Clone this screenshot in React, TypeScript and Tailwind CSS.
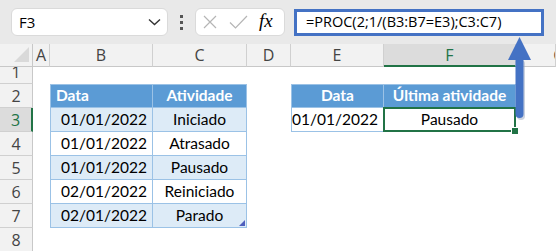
import React from "react";

const FONT = { fontFamily: "Lato, 'Open Sans', sans-serif" };

type Cell = {
  text?: string;
  align?: "l" | "c" | "r";
  kind?: "th" | "band" | "plain" | "none";
  first?: boolean;
  top?: boolean;
  sel?: boolean;
  handle?: boolean;
};

const colLetters = ["A", "B", "C", "D", "E", "F", "G"];

function rowCells(r: number): Cell[] {
  const empty: Cell = { kind: "none" };
  const cells: Cell[] = [empty, empty, empty, empty, empty, empty, empty];
  const t1: [string, string][] = [
    ["01/01/2022", "Iniciado"],
    ["01/01/2022", "Atrasado"],
    ["01/01/2022", "Pausado"],
    ["02/01/2022", "Reiniciado"],
    ["02/01/2022", "Parado"],
  ];
  if (r === 2) {
    cells[1] = { text: "Data", kind: "th", align: "l", first: true, top: true };
    cells[2] = { text: "Atividade", kind: "th", align: "c", top: true };
    cells[4] = { text: "Data", kind: "th", align: "c", first: true, top: true };
    cells[5] = { text: "Última atividade", kind: "th", align: "c", top: true };
  } else if (r >= 3 && r <= 7) {
    const band = r % 2 === 1 ? "band" : "plain";
    const [d, a] = t1[r - 3];
    cells[1] = { text: d, kind: band, align: "r", first: true };
    cells[2] = { text: a, kind: band, align: "c", handle: r === 7 };
  }
  if (r === 3) {
    cells[4] = { text: "01/01/2022", kind: "plain", align: "r", first: true };
    cells[5] = { text: "Pausado", kind: "plain", align: "c", sel: true };
  }
  return cells;
}

function GridCell({ c }: { c: Cell }) {
  if (c.kind === "none") return <div className="bg-white" />;
  const bg =
    c.kind === "th"
      ? "bg-[#5b9bd5] text-white font-bold"
      : c.kind === "band"
      ? "bg-[#ddebf7] text-black"
      : "bg-white text-black";
  const just =
    c.align === "l" ? "justify-start pl-[5px]" : c.align === "r" ? "justify-end pr-[5px]" : "justify-center";
  return (
    <div
      className={`relative flex items-end pb-[1px] text-[15.5px] leading-[22px] border-[#9bc2e6] border-r border-b ${
        c.first ? "border-l" : ""
      } ${c.top ? "border-t" : ""} ${bg} ${just}`}
    >
      <span className="whitespace-nowrap">{c.text}</span>
      {c.sel && (
        <>
          <div className="absolute -left-[1px] -top-[1px] -right-[1px] -bottom-[1px] border-2 border-[#217346]" />
          <div className="absolute -right-[4px] -bottom-[4px] w-[6px] h-[6px] bg-[#217346] border border-white box-content" />
        </>
      )}
      {c.handle && (
        <svg className="absolute right-[1px] bottom-[1px]" width="6" height="6" viewBox="0 0 6 6">
          <polygon points="6,0 6,6 0,6" fill="#4f5fbd" />
        </svg>
      )}
    </div>
  );
}

export default function App() {
  const rows = [1, 2, 3, 4, 5, 6, 7, 8];
  return (
    <div className="relative w-[556px] h-[251px] overflow-hidden bg-white" style={FONT}>
      {/* top bar */}
      <div className="h-[44px] bg-[#e9e9e9] flex items-center pl-[11px]">
        <div className="w-[157px] h-[28px] bg-white rounded-[6px] border border-[#dadada] flex items-center justify-between pl-[7px] pr-[6px]">
          <span className="text-[15px] text-black" style={{ fontFamily: "'Open Sans', sans-serif" }}>
            F3
          </span>
          <svg width="13" height="8" viewBox="0 0 13 8">
            <path d="M1 1.5 L6.5 6.5 L12 1.5" fill="none" stroke="#333" strokeWidth="1.4" />
          </svg>
        </div>
        <div className="w-[27px] flex flex-col items-center gap-[3px]">
          <div className="w-[3px] h-[3px] bg-[#555]" />
          <div className="w-[3px] h-[3px] bg-[#555]" />
          <div className="w-[3px] h-[3px] bg-[#555]" />
        </div>
        <div className="w-[90px] h-[28px] bg-white rounded-[6px] border border-[#dadada] flex items-center pl-[6px] gap-[11px]">
          <svg width="16" height="16" viewBox="0 0 16 16">
            <path d="M2 2 L14 14 M14 2 L2 14" stroke="#b5b5b5" strokeWidth="1.2" />
          </svg>
          <svg width="19" height="16" viewBox="0 0 19 16">
            <path d="M1 8.5 L6.5 14 L18 2" fill="none" stroke="#b5b5b5" strokeWidth="1.2" />
          </svg>
          <span
            className="italic text-[19px] leading-none text-black -mt-[3px]"
            style={{ fontFamily: "'Liberation Serif', serif" }}
          >
            fx
          </span>
        </div>
        <div className="ml-[9px] w-[250px] h-[27px] bg-white border-[3px] border-[#4472c4] flex items-center pl-[9px]">
          <span
            className="text-[14.5px] text-black whitespace-nowrap"
            style={{ fontFamily: "'Open Sans', sans-serif" }}
          >
            =PROC(2;1/(B3:B7=E3);C3:C7)
          </span>
        </div>
      </div>

      {/* grid */}
      <div className="grid grid-cols-[33px_17px_103px_94px_44px_93px_132px_1fr] grid-rows-[23px_17px_repeat(7,24px)]">
        {/* corner */}
        <div className="relative bg-[#f2f2f2] border-r border-b border-[#c8c8c8]">
          <svg className="absolute right-[3px] bottom-[4px]" width="15" height="15" viewBox="0 0 15 15">
            <polygon points="15,0 15,15 0,15" fill="#d9d9d9" />
          </svg>
        </div>
        {colLetters.map((l) => (
          <div
            key={l}
            className={`flex items-center justify-center text-[16px] border-r ${
              l === "F"
                ? "bg-[#dcdcdc] text-[#217346] border-b-2 border-b-[#217346] border-r-[#d0d0d0]"
                : "bg-[#f2f2f2] text-[#444] border-b border-[#d0d0d0] border-b-[#c8c8c8]"
            } ${l === "G" ? "justify-end pr-0 overflow-hidden" : ""}`}
            style={{ fontFamily: "'Open Sans', sans-serif" }}
          >
            {l === "G" ? <span className="mr-[-10px]">G</span> : l}
          </div>
        ))}
        {rows.map((r) => (
          <React.Fragment key={r}>
            <div
              className={`flex items-end justify-center text-[16px] leading-[22px] border-b border-[#d0d0d0] ${
                r === 3
                  ? "bg-[#dcdcdc] text-[#217346] border-r-2 border-r-[#217346]"
                  : "bg-[#f2f2f2] text-[#444] border-r border-r-[#c8c8c8]"
              } overflow-hidden`}
              style={{ fontFamily: "'Open Sans', sans-serif" }}
            >
              {r}
            </div>
            {rowCells(r).map((c, i) => (
              <GridCell key={i} c={c} />
            ))}
          </React.Fragment>
        ))}
      </div>

      {/* arrow */}
      <svg className="absolute left-[500px] top-[30px]" width="40" height="100" viewBox="0 0 40 100">
        <rect x="17" y="30" width="8" height="60" rx="4" fill="#9aa7bf" opacity="0.5" />
        <polygon points="19.5,7 8,30 31,30" fill="#4472c4" />
        <rect x="15.5" y="27" width="8" height="61" rx="4" fill="#4472c4" />
      </svg>
    </div>
  );
}
